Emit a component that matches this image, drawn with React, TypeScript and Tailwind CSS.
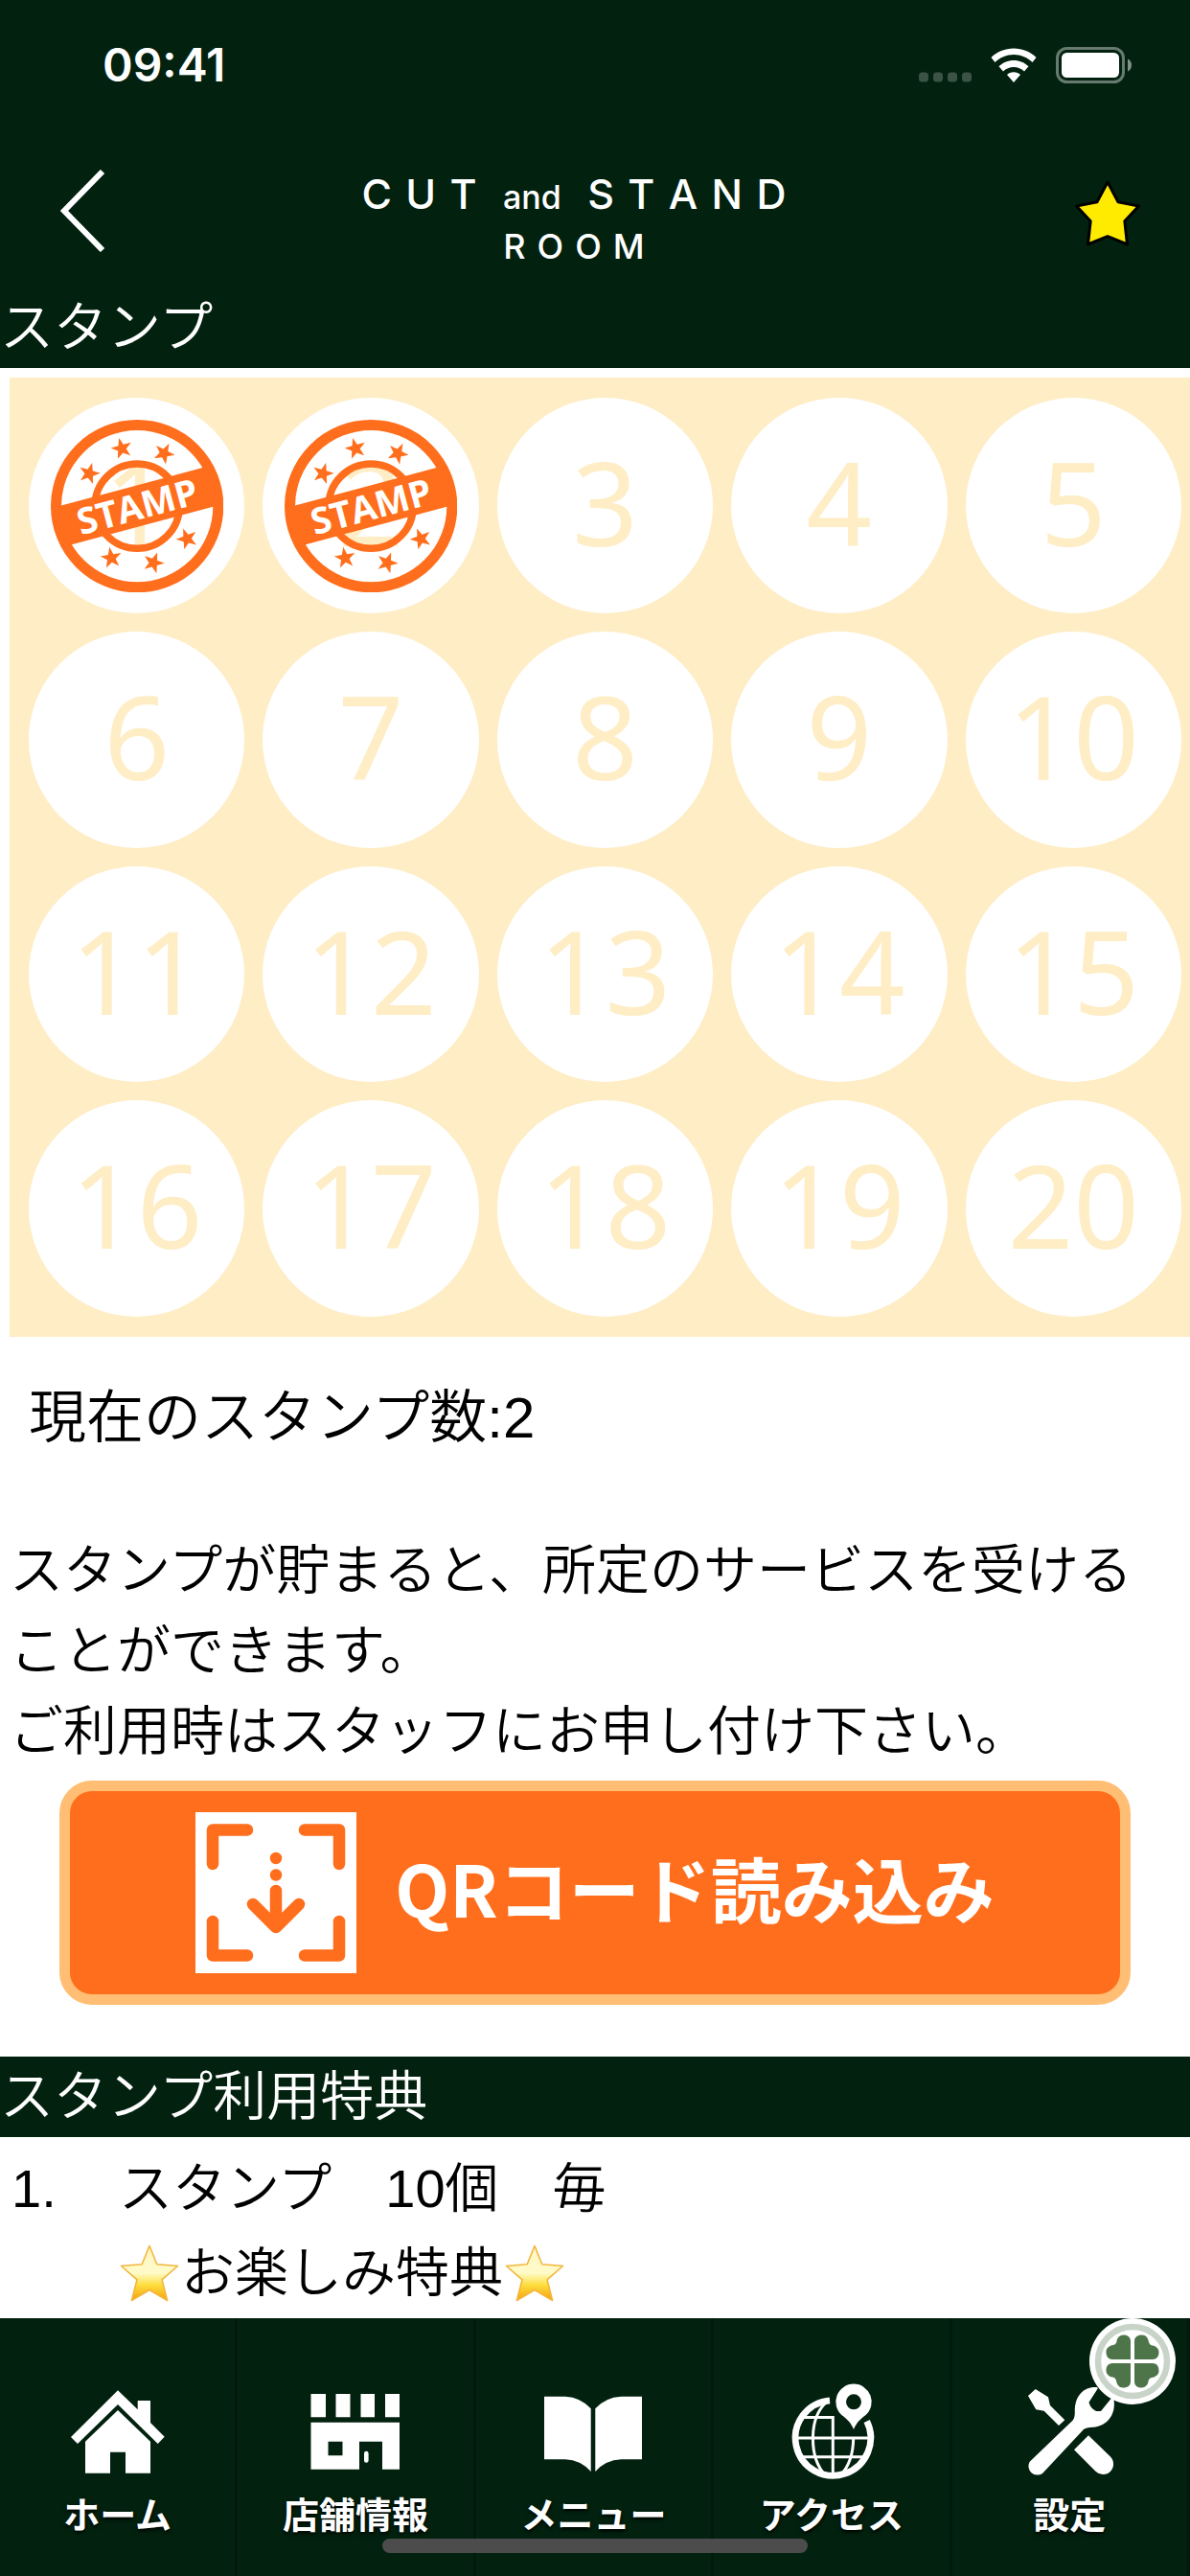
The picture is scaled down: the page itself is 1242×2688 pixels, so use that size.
import type { ReactNode } from "react";

const STAMP_TOTAL = 20;
const STAMP_COUNT = 2;

// x, y and rotation of the small stars between the two rings
const stampStars = [
  [-16, -60, -15],
  [28, -55, 27],
  [-50, -34, -56],
  [52, 34, 123],
  [-27, 54, 207],
  [17, 59, 164],
];

function Stamp() {
  return (
    <svg viewBox="-90 -90 180 180" className="absolute inset-0 m-auto w-4/5" role="img" aria-label="STAMP">
      <g fill="none" stroke="#ff6e1c">
        <circle r="84.5" strokeWidth="11" />
        <circle r="44" strokeWidth="7.5" />
      </g>
      {stampStars.map(([x, y, r]) => (
        <path
          key={x}
          transform={`translate(${x} ${y}) rotate(${r})`}
          d="M0-11.5 2.7-3.7 10.9-3.6 4.4 1.4 6.8 9.3 0 4.6-6.8 9.3-4.4 1.4-10.9-3.6-2.7-3.7Z"
          fill="#ff6e1c"
        />
      ))}
      <g transform="rotate(-15)">
        <path d="M-83-21H83Q90 0 83 21H-83Q-90 0-83-21Z" fill="#ff6e1c" />
        <text y="14" textAnchor="middle" className="fill-white font-['Open_Sans',sans-serif] text-[38px] font-bold">
          STAMP
        </text>
      </g>
    </svg>
  );
}

function EmojiStar({ id }: { id: string }) {
  return (
    <svg viewBox="0 0 64 64" className="size-16" aria-hidden="true">
      <defs>
        <linearGradient id={id} x1="0" y1="0" x2="0" y2="1">
          <stop offset="0" stopColor="#fff6c4" />
          <stop offset=".5" stopColor="#fffbc8" />
          <stop offset=".72" stopColor="#fedd3c" />
          <stop offset="1" stopColor="#f5a010" />
        </linearGradient>
      </defs>
      <path
        d="M32 3.5 39.8 22.8 61.5 24.5 45 38.8 50.6 60.5 32 49.5 13.4 60.5 19 38.8 2.5 24.5 24.2 22.8Z"
        fill={`url(#${id})`}
        stroke="#f3b63c"
        strokeWidth="1.6"
        strokeLinejoin="round"
      />
    </svg>
  );
}

function TabIcon({ children }: { children: ReactNode }) {
  return (
    <svg viewBox="0 0 104 104" className="size-[104px]" fill="#fff" aria-hidden="true">
      {children}
    </svg>
  );
}

const tabs = [
  {
    label: "ホーム",
    icon: (
      <TabIcon>
        <path d="M52 8.3 72.7 28.3V19H86V42L100.7 56.7 93.7 64 52 23 10 64 3 57Z" />
        <path d="M52 29 86 61.7V94.7H60V72.7H44V94.7H18V61.7Z" />
      </TabIcon>
    ),
  },
  {
    label: "店舗情報",
    icon: (
      <TabIcon>
        <path d="M5.5 12H21V36.3H5.5ZM31.5 12H46.5V36.3H31.5ZM57.5 12H72V36.3H57.5ZM83 12H98V36.3H83Z" />
        <path
          fillRule="evenodd"
          d="M5.5 41.7H98V90.7H80V61.7H56V90.7H5.5ZM23.5 61.7V76.3H38.5V61.7Z"
        />
        <rect x="61" y="71.7" width="4.6" height="12" rx="2.3" />
      </TabIcon>
    ),
  },
  {
    label: "メニュー",
    icon: (
      <TabIcon>
        <path d="M1 14.7H23Q39 15.5 49.7 27.3V93Q39 81 23 80.3H1Z" />
        <path d="M103 14.7H81.3Q65 15.5 54.3 27.3V93Q65 81 81.3 80.3H103Z" />
      </TabIcon>
    ),
  },
  {
    label: "アクセス",
    icon: (
      <TabIcon>
        <g fill="none" stroke="#fff" strokeWidth="3">
          <path strokeWidth="6.8" d="M50 18.8A39.3 39.3 0 1 0 88.7 40.6" />
          <path d="M23 36.5H53.3V97M16 58H91M21 77.7H85" />
          <path d="M46 21C28 38 28 78 45.5 97M74.7 58C74.5 74 70 88 61 97" />
        </g>
        <path
          fillRule="evenodd"
          d="M75 1.6a18.7 18.7 0 0 1 12.6 32.5C81 39 78 42.5 75 49 72 42.5 69 39 62.4 34.1A18.7 18.7 0 0 1 75 1.6ZM75 12.3a8 8 0 1 0 0 16 8 8 0 0 0 0-16Z"
        />
      </TabIcon>
    ),
  },
  {
    label: "設定",
    icon: (
      <TabIcon>
        <path d="M16.7 7 30 15.3 32 24 47.3 39.3 41 45 25.7 29.7 17.3 28.3 9 14Z" />
        <path d="M72 55.3 94.7 77.3A10.7 10.7 0 0 1 79.7 93L57 70.3Z" />
        <path d="M80.7 5C67 4 57.5 14 57.8 30.7Q58 37 55.5 39.7L10.7 82.7A9.3 9.3 0 0 0 24 95L67 49Q69 47 77 46.7C91 46 101 34 98.5 18L95.7 16.7 85 30H80Q74 27 72.5 20.7L82 6Z" />
      </TabIcon>
    ),
  },
];

function StatusBar() {
  return (
    <div className="flex h-[140px] items-start justify-between pt-10 pr-[60px] pl-[107px]">
      <span className="font-['Inter',sans-serif] text-5xl leading-[56px] font-semibold">09:41</span>
      <div className="flex h-14 items-center gap-5">
        <svg viewBox="0 0 55 36" className="h-9 w-[55px]" fill="#fff" opacity=".22" aria-hidden="true">
          <rect y="25.5" width="10" height="10" rx="3.5" />
          <rect x="15" y="25.5" width="10" height="10" rx="3.5" />
          <rect x="30" y="25.5" width="10" height="10" rx="3.5" />
          <rect x="45" y="25.5" width="10" height="10" rx="3.5" />
        </svg>
        <svg viewBox="0 0 48 36" className="h-9 w-12" fill="#fff" aria-hidden="true">
          <path d="M24 .5C33 .5 41.5 4 47.5 10L43.5 15C38.5 10 31.5 7 24 7S9.5 10 4.5 15L.5 10C6.5 4 15 .5 24 .5Z" />
          <path d="M24 13C30 13 35.5 15.3 39.5 19.3L35 24.5C32 21.5 28.2 20 24 20S16 21.5 13 24.5L8.5 19.3C12.5 15.3 18 13 24 13Z" />
          <path d="M24 25.3C26.7 25.3 29.2 26.2 31 28L24 36 17 28C18.8 26.2 21.3 25.3 24 25.3Z" />
        </svg>
        <svg viewBox="0 0 80 38" className="h-[38px] w-20" aria-hidden="true">
          <rect x="1.5" y="1.5" width="69" height="35" rx="10" fill="none" stroke="#fff" strokeOpacity=".4" strokeWidth="3" />
          <rect x="6" y="6" width="60" height="26" rx="5.5" fill="#fff" />
          <path d="M75 12.5C77.5 13.5 79 16 79 19S77.5 24.5 75 25.5Z" fill="#fff" fillOpacity=".5" />
        </svg>
      </div>
    </div>
  );
}

function Header() {
  return (
    <header className="bg-[#02220f] text-white">
      <StatusBar />
      <div className="flex h-40 items-center">
        <button type="button" aria-label="戻る" className="w-[110px] pl-[62px]">
          <svg viewBox="0 0 48 86" className="h-[86px] w-12" fill="none" stroke="#fff" strokeWidth="6">
            <path d="M45 2 5 43 45 84" />
          </svg>
        </button>
        <h1 className="flex-1 pt-5 text-center font-['Inter',sans-serif] text-[43px] leading-[49px] font-medium">
          C&#x2004;U&#x2004;T&ensp;
          <span className="text-[34px]">&thinsp;and&thinsp;</span>
          &ensp;S&#x2004;T&#x2004;A&#x2004;N&#x2004;D
          <br />
          <span className="text-4xl leading-[49px]">R&#x2004;O&#x2004;O&#x2004;M</span>
        </h1>
        <button type="button" aria-label="お気に入り" className="w-[154px] pt-1 pl-8">
          <svg viewBox="0 0 72 72" className="size-[72px]">
            <path
              d="M36 4 47 24.7 68.5 29 53.8 44.7 56.5 69 36 60.7 15.5 69 18.2 44.7 3.5 29 25 24.7Z"
              fill="#ffeb00"
              stroke="#000"
              strokeWidth="3"
              strokeLinejoin="round"
            />
          </svg>
        </button>
      </div>
    </header>
  );
}

function SectionTitle({ children }: { children: ReactNode }) {
  return <h2 className="bg-[#02220f] text-[56px] leading-[84px] font-[350] text-white">{children}</h2>;
}

export default function App() {
  const stamps = Array.from({ length: STAMP_TOTAL }, (_, i) => i + 1);

  return (
    <div className="relative flex min-h-screen flex-col overflow-x-hidden bg-white font-['Liberation_Sans','Noto_Sans_CJK_JP',sans-serif] text-black">
      <Header />

      <main className="flex-1">
        <SectionTitle>スタンプ</SectionTitle>

        <ol className="mt-[10px] ml-[10px] grid grid-cols-5 gap-[19px] bg-[#feedc5] py-[21px] pr-[9px] pl-5">
          {stamps.map((n) => (
            <li
              key={n}
              className="relative flex aspect-square items-center justify-center rounded-full bg-white pb-2 font-['Noto_Sans',sans-serif] text-[120px] leading-none text-[#feedc5]"
            >
              {n}
              {n <= STAMP_COUNT && <Stamp />}
            </li>
          ))}
        </ol>

        <p className="mt-10 ml-[30px] text-[60px] leading-[90px] font-[350]">現在のスタンプ数:{STAMP_COUNT}</p>

        <p className="mt-[72px] px-[10px] text-[56px] leading-[84px] font-[350]">
          スタンプが貯まると、所定のサービスを受けることができます。
          <br />
          ご利用時はスタッフにお申し付け下さい。
        </p>

        <button
          type="button"
          className="mx-auto mt-[9px] mb-[54px] flex w-9/10 items-center justify-center gap-10 rounded-[34px] border-[11px] border-[#ffbe73] bg-[#ff6e1c] py-[22px] font-['Noto_Sans_CJK_JP',sans-serif] text-[74px] leading-[108px] font-bold text-white"
        >
          <svg viewBox="0 0 168 168" className="size-[168px]" aria-hidden="true">
            <rect width="168" height="168" fill="#fff" />
            <g fill="none" stroke="#ff6e1c" strokeWidth="12.5" strokeLinecap="round" strokeLinejoin="round">
              <path d="M18 54V18.5H54M114 18.5H150V54M18 114V149.5H54M114 149.5H150V114" />
              <path d="M84 82V117M60 96 84 120 108 96" />
              <path d="M84 48V48.01M84 65.5V65.51" />
            </g>
            <path d="M84 99 92 108 84 120 76 108Z" fill="#ff6e1c" />
          </svg>
          <span className="pb-3">QRコード読み込み</span>
        </button>

        <SectionTitle>スタンプ利用特典</SectionTitle>

        <ol className="px-3 pt-3 pb-1 text-[56px] leading-[84px] font-[350]">
          <li className="flex">
            <span className="w-28">1.</span>
            <div>
              <p>スタンプ　10個　毎</p>
              <p className="flex items-center pt-1">
                <EmojiStar id="star-left" />
                <span className="px-px">お楽しみ特典</span>
                <EmojiStar id="star-right" />
              </p>
            </div>
          </li>
        </ol>
      </main>

      <nav className="relative grid grid-cols-5 bg-[#02220f]">
        {tabs.map((tab) => (
          <a
            key={tab.label}
            href="#"
            className="flex flex-col items-center border-r-3 border-[#011a0b] pt-[67px] pb-[35px] font-['Noto_Sans_CJK_JP',sans-serif] text-[38px] leading-[63px] font-bold text-white [text-shadow:0_2px_4px_#000] last:border-r-0"
          >
            {tab.icon}
            {tab.label}
          </a>
        ))}
        <svg viewBox="-45 -45 90 90" className="absolute top-0 right-[15px] size-[90px]" aria-hidden="true">
          <circle r="45" fill="#fff" />
          <circle r="36" fill="none" stroke="#c9d4c9" strokeWidth="6.5" />
          {[0, 90, 180, 270].map((r) => (
            <path
              key={r}
              transform={`rotate(${r})`}
              d="M-2-2V-21C-2-26-6-27.5-9.5-27.5-13.5-27.5-16-24.5-16.5-21-16.7-19-18-17.5-20-17-24-16.5-27.5-14-27.5-10-27.5-6-26-2-21-2Z"
              fill="#4e7449"
            />
          ))}
        </svg>
        <div className="absolute inset-x-0 bottom-6 mx-auto h-[15px] w-[444px] rounded-full bg-[#4c4c4c]" />
      </nav>
    </div>
  );
}
